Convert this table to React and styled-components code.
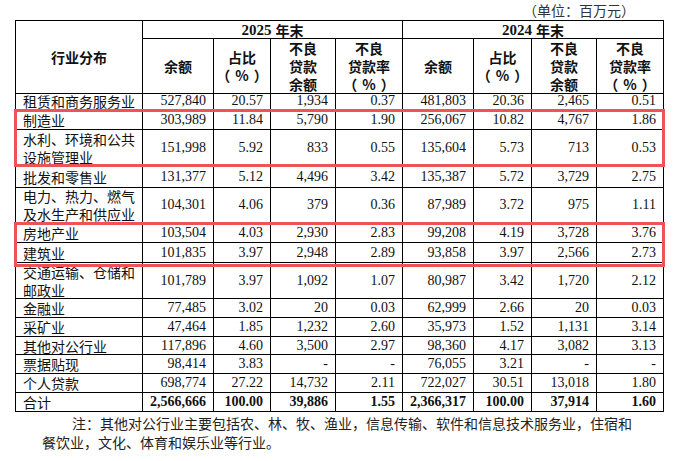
import React from "react";
import styled, { createGlobalStyle } from "styled-components";

const Global = createGlobalStyle`
  html, body { margin: 0; padding: 0; background: #fff; }
  body {
    font-family: "Liberation Serif", "Noto Sans CJK SC", serif;
    color: #111;
  }
`;

const Page = styled.div`
  width: 678px;
  height: 461px;
  padding: 0 0 0 15px;
  box-sizing: border-box;
  overflow: hidden;
`;

const Unit = styled.div`
  width: 620px;
  height: 20px;
  text-align: right;
  font-family: "Noto Sans CJK SC", sans-serif;
  font-size: 14px;
  line-height: 21px;
  color: #333;
`;

const TableWrap = styled.div`
  position: relative;
  width: 648px;
`;

const Table = styled.table`
  width: 648px;
  table-layout: fixed;
  border-collapse: collapse;
  border: 1px solid #000;
`;

const Th = styled.th`
  border: 1px solid #000;
  padding: 0;
  font-family: "Noto Sans CJK SC", sans-serif;
  font-weight: bold;
  font-size: 14px;
  line-height: 18px;
  text-align: center;
  vertical-align: middle;
  color: #111;
`;

const HeadBox = styled.div`
  height: ${(p) => p.$h}px;
  display: flex;
  align-items: center;
  justify-content: center;
  overflow: hidden;
`;

const Year = styled.span`
  font-family: "Liberation Serif", serif;
  font-size: 15px;
  font-weight: bold;
  margin-right: 4px;
`;

const Pct = styled.span`
  margin: 0 5px;
`;

const Td = styled.td`
  border: 1px solid #000;
  padding: 0;
  color: #111;
`;

const Cell = styled.div`
  height: ${(p) => p.$h - 1}px;
  display: flex;
  align-items: center;
  justify-content: ${(p) => (p.$label ? "flex-start" : "flex-end")};
  padding: ${(p) => (p.$label ? "0 0 0 7px" : "0 7px 0 0")};
  font-family: ${(p) =>
    p.$label ? `"Noto Sans CJK SC", sans-serif` : `"Liberation Serif", serif`};
  font-size: 14px;
  line-height: 18px;
  font-weight: ${(p) => (p.$bold ? "bold" : "normal")};
  white-space: ${(p) => (p.$label ? "normal" : "nowrap")};
  overflow: ${(p) => (p.$clip ? "hidden" : "visible")};
  ${(p) => (p.$clip ? "align-items: flex-end; line-height: 16px;" : "")}
`;

const Mark = styled.div`
  position: absolute;
  left: -1px;
  width: 651px;
  top: ${(p) => p.$top}px;
  height: ${(p) => p.$h}px;
  border: 3px solid #ef5257;
  box-sizing: border-box;
  pointer-events: none;
`;

const Note = styled.p`
  margin: 2px 0 0 27px;
  width: 600px;
  font-family: "Noto Sans CJK SC", sans-serif;
  font-size: 14px;
  line-height: 18.5px;
  text-indent: 30px;
  color: #222;
`;

const rows = [
  ["租赁和商务服务业", "527,840", "20.57", "1,934", "0.37", "481,803", "20.36", "2,465", "0.51", 16, true],
  ["制造业", "303,989", "11.84", "5,790", "1.90", "256,067", "10.82", "4,767", "1.86", 20],
  ["水利、环境和公共设施管理业", "151,998", "5.92", "833", "0.55", "135,604", "5.73", "713", "0.53", 37],
  ["批发和零售业", "131,377", "5.12", "4,496", "3.42", "135,387", "5.72", "3,729", "2.75", 21],
  ["电力、热力、燃气及水生产和供应业", "104,301", "4.06", "379", "0.36", "87,989", "3.72", "975", "1.11", 35],
  ["房地产业", "103,504", "4.03", "2,930", "2.83", "99,208", "4.19", "3,728", "3.76", 20],
  ["建筑业", "101,835", "3.97", "2,948", "2.89", "93,858", "3.97", "2,566", "2.73", 20],
  ["交通运输、仓储和邮政业", "101,789", "3.97", "1,092", "1.07", "80,987", "3.42", "1,720", "2.12", 36],
  ["金融业", "77,485", "3.02", "20", "0.03", "62,999", "2.66", "20", "0.03", 19],
  ["采矿业", "47,464", "1.85", "1,232", "2.60", "35,973", "1.52", "1,131", "3.14", 19],
  ["其他对公行业", "117,896", "4.60", "3,500", "2.97", "98,360", "4.17", "3,082", "3.13", 18],
  ["票据贴现", "98,414", "3.83", "-", "-", "76,055", "3.21", "-", "-", 19],
  ["个人贷款", "698,774", "27.22", "14,732", "2.11", "722,027", "30.51", "13,018", "1.80", 19],
];

const total = ["合计", "2,566,666", "100.00", "39,886", "1.55", "2,366,317", "100.00", "37,914", "1.60", 19];

const widths = [127, 71, 57, 65, 67, 71, 58, 65, 67];

const SubHeads = () => (
  <>
    <Th><HeadBox $h={54}>余额</HeadBox></Th>
    <Th><HeadBox $h={54}><div>占比<br />（<Pct>%</Pct>）</div></HeadBox></Th>
    <Th><HeadBox $h={54}><div>不良<br />贷款<br />余额</div></HeadBox></Th>
    <Th><HeadBox $h={54}><div>不良<br />贷款率<br />（<Pct>%</Pct>）</div></HeadBox></Th>
  </>
);

export default function App() {
  return (
    <Page>
      <Global />
      <Unit>（单位：百万元）</Unit>
      <TableWrap>
        <Table>
          <colgroup>
            {widths.map((w, i) => (
              <col key={i} style={{ width: w }} />
            ))}
          </colgroup>
          <thead>
            <tr>
              <Th rowSpan={2}>行业分布</Th>
              <Th colSpan={4}><HeadBox $h={17}><Year>2025</Year>年末</HeadBox></Th>
              <Th colSpan={4}><HeadBox $h={17}><Year>2024</Year>年末</HeadBox></Th>
            </tr>
            <tr>
              <SubHeads />
              <SubHeads />
            </tr>
          </thead>
          <tbody>
            {rows.map((r) => (
              <tr key={r[0]}>
                <Td>
                  <Cell $label $h={r[9]} $clip={r[10]}>{r[0]}</Cell>
                </Td>
                {r.slice(1, 9).map((v, i) => (
                  <Td key={i}>
                    <Cell $h={r[9]} $clip={r[10]}>{v}</Cell>
                  </Td>
                ))}
              </tr>
            ))}
            <tr>
              <Td><Cell $label $h={total[9]}>{total[0]}</Cell></Td>
              {total.slice(1, 9).map((v, i) => (
                <Td key={i}><Cell $h={total[9]} $bold>{v}</Cell></Td>
              ))}
            </tr>
          </tbody>
        </Table>
        <Mark $top={89} $h={58} />
        <Mark $top={202} $h={45} />
      </TableWrap>
      <Note>注：其他对公行业主要包括农、林、牧、渔业，信息传输、软件和信息技术服务业，住宿和餐饮业，文化、体育和娱乐业等行业。</Note>
    </Page>
  );
}
